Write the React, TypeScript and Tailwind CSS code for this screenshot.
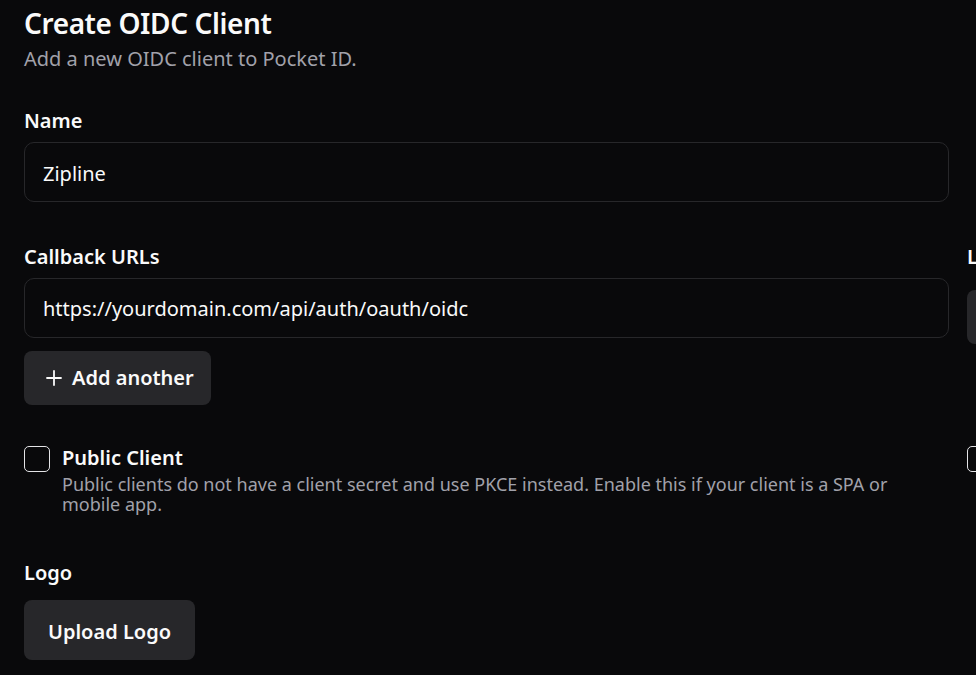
import React from "react";

function Plus() {
  return (
    <svg width="16" height="16" viewBox="0 0 16 16" fill="none" stroke="currentColor" strokeWidth="1.8" strokeLinecap="round">
      <path d="M8 1v14M1 8h14" />
    </svg>
  );
}

export default function App() {
  return (
    <div
      className="w-[976px] h-[675px] overflow-hidden bg-[#09090b] text-[#fafafa] pl-[24px]"
      style={{ fontFamily: '"Noto Sans", "Open Sans", sans-serif' }}
    >
      <h1 className="pt-[5px] text-[28px] leading-[36px] font-semibold tracking-[-0.4px]">Create OIDC Client</h1>
      <p className="mt-[6px] text-[20px] leading-[24px] text-[#a1a1aa]">Add a new OIDC client to Pocket ID.</p>

      <div className="mt-[38px] grid grid-cols-[925px_925px] gap-x-[18px]">
        {/* Name */}
        <div>
          <div className="text-[20px] leading-[24px] font-semibold">Name</div>
          <div className="mt-[9px] h-[60px] rounded-[10px] border border-[#27272a] flex items-center px-[18px] pt-[3px] text-[20px]">
            Zipline
          </div>
        </div>
        <div />

        {/* Callback URLs */}
        <div className="mt-[43px]">
          <div className="text-[20px] leading-[24px] font-semibold">Callback URLs</div>
          <div className="mt-[9px] h-[60px] rounded-[10px] border border-[#27272a] flex items-center px-[18px] pt-[2px] text-[20px]">
            https://yourdomain.com/api/auth/oauth/oidc
          </div>
          <button className="mt-[13px] h-[54px] rounded-[8px] bg-[#27272a] flex items-center gap-[10px] pl-[22px] pr-[17px] text-[20px] font-semibold">
            <Plus />
            <span>Add another</span>
          </button>
        </div>
        <div className="mt-[43px]">
          <div className="text-[20px] leading-[24px] font-semibold">Logout Callback URLs</div>
          <button className="mt-[21px] h-[54px] rounded-[8px] bg-[#27272a] flex items-center gap-[10px] pl-[22px] pr-[17px] text-[20px] font-semibold">
            <Plus />
            <span>Add Logout URL</span>
          </button>
        </div>

        {/* Public Client */}
        <div className="mt-[41px] flex gap-[12px]">
          <div className="shrink-0 w-[26px] h-[26px] rounded-[5px] border-[1.5px] border-[#e4e4e7]" />
          <div>
            <div className="text-[20px] leading-[24px] font-semibold">Public Client</div>
            <p className="mt-[4px] text-[18px] leading-[20px] text-[#a1a1aa]">
              Public clients do not have a client secret and use PKCE instead. Enable this if your client is a SPA or mobile app.
            </p>
          </div>
        </div>
        <div className="mt-[41px] flex gap-[12px]">
          <div className="shrink-0 w-[26px] h-[26px] rounded-[5px] border-[1.5px] border-[#e4e4e7]" />
          <div>
            <div className="text-[20px] leading-[24px] font-semibold">PKCE</div>
            <p className="mt-[4px] text-[18px] leading-[20px] text-[#a1a1aa]">
              Public Key Code Exchange is a security feature to prevent CSRF and authorization code interception attacks.
            </p>
          </div>
        </div>

        {/* Logo */}
        <div className="mt-[47px]">
          <div className="text-[20px] leading-[24px] font-semibold">Logo</div>
          <button className="mt-[15px] h-[60px] rounded-[8px] bg-[#27272a] px-[24px] pt-[3px] text-[20px] font-semibold">
            Upload Logo
          </button>
        </div>
        <div />
      </div>
    </div>
  );
}
